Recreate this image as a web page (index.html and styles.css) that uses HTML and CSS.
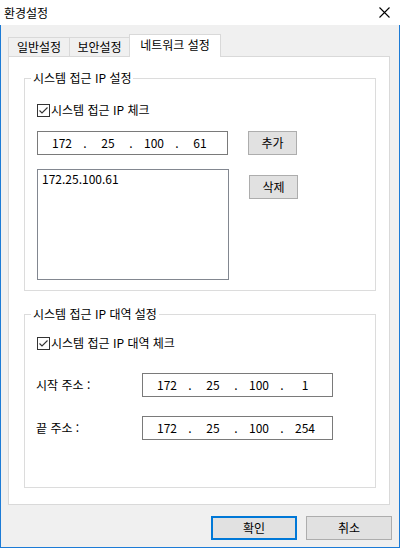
FILE: index.html
```html
<!DOCTYPE html>
<html lang="ko">
<head>
<meta charset="utf-8">
<title>환경설정</title>
<link rel="stylesheet" href="styles.css">
</head>
<body>
<div class="window">
  <div class="titlebar">
    <span class="title">환경설정</span>
    <svg class="close" width="11" height="11" viewBox="0 0 11 11"><path d="M0.5 0.5 L10.5 10.5 M10.5 0.5 L0.5 10.5" stroke="#000" stroke-width="1.1" fill="none"/></svg>
  </div>
  <div class="client">
    <div class="tabs">
      <div class="tab t1">일반설정</div>
      <div class="tab t2">보안설정</div>
      <div class="tab t3 active">네트워크 설정</div>
    </div>
    <div class="panel">
      <fieldset class="group g1">
        <legend>시스템 접근 IP 설정</legend>
        <div class="check">
          <svg class="cbox" width="13" height="13" viewBox="0 0 13 13"><rect x="0.5" y="0.5" width="12" height="12" fill="#fff" stroke="#333"/><path d="M2.5 6.5 L5 9 L10.5 3.5" stroke="#333" stroke-width="1.1" fill="none"/></svg>
          <span>시스템 접근 IP 체크</span>
        </div>
        <div class="iprow">
          <div class="ipfield">
            <span class="oct">172</span><span class="dot">.</span><span class="oct">25</span><span class="dot">.</span><span class="oct">100</span><span class="dot">.</span><span class="oct">61</span>
          </div>
          <div class="btn small">추가</div>
        </div>
        <div class="listrow">
          <div class="listbox">172.25.100.61</div>
          <div class="btn small del">삭제</div>
        </div>
      </fieldset>
      <fieldset class="group g2">
        <legend>시스템 접근 IP 대역 설정</legend>
        <div class="check">
          <svg class="cbox" width="13" height="13" viewBox="0 0 13 13"><rect x="0.5" y="0.5" width="12" height="12" fill="#fff" stroke="#333"/><path d="M2.5 6.5 L5 9 L10.5 3.5" stroke="#333" stroke-width="1.1" fill="none"/></svg>
          <span>시스템 접근 IP 대역 체크</span>
        </div>
        <div class="addr first">
          <span class="alabel">시작 주소 :</span>
          <div class="ipfield">
            <span class="oct">172</span><span class="dot">.</span><span class="oct">25</span><span class="dot">.</span><span class="oct">100</span><span class="dot">.</span><span class="oct">1</span>
          </div>
        </div>
        <div class="addr second">
          <span class="alabel">끝 주소 :</span>
          <div class="ipfield">
            <span class="oct">172</span><span class="dot">.</span><span class="oct">25</span><span class="dot">.</span><span class="oct">100</span><span class="dot">.</span><span class="oct">254</span>
          </div>
        </div>
      </fieldset>
    </div>
    <div class="footer">
      <div class="btn big default">확인</div>
      <div class="btn big">취소</div>
    </div>
  </div>
</div>
</body>
</html>
```
FILE: styles.css
```css
* { box-sizing: border-box; }
html, body { margin: 0; padding: 0; }
body {
  width: 400px;
  height: 548px;
  overflow: hidden;
  background: #fff;
  color: #000;
  font-family: "Noto Sans CJK KR", "Noto Sans", sans-serif;
  font-size: 12px;
  line-height: 16px;
}
.window {
  width: 400px;
  height: 548px;
  display: flex;
  flex-direction: column;
}
.titlebar {
  flex: none;
  height: 25px;
  background: #fff;
  display: flex;
  align-items: center;
  justify-content: space-between;
  padding: 0 10px 0 4px;
}
.close { display: block; }
.client {
  flex: 1;
  background: #f0f0f0;
  border: 1px solid #1c7bd6;
  border-top: none;
  padding: 9px 7px 0 7px;
  display: flex;
  flex-direction: column;
}
.tabs {
  display: flex;
  align-items: flex-end;
  height: 22px;
}
.tab {
  height: 19px;
  border: 1px solid #d9d9d9;
  border-bottom: none;
  background: #f0f0f0;
  text-align: center;
  line-height: 18px;
}
.tab + .tab { margin-left: -1px; }
.t1 { width: 62px; }
.t2 { width: 61px; }
.t3 { width: 92px; }
.tab.active {
  height: 23px;
  margin-bottom: -1px;
  background: #fff;
  position: relative;
  z-index: 1;
  line-height: 20px;
}
.panel {
  width: 382px;
  background: #fff;
  border: 1px solid #d9d9d9;
  padding: 0 13px 16px 15px;
}
.group {
  margin: 0;
  padding: 0 0 10px 12px;
  border: 1px solid #dcdcdc;
  min-width: 0;
}
.g1 { margin-top: 13px; }
.g2 { margin-top: 15px; padding-bottom: 47px; }
.group legend {
  padding: 0 2px;
  margin-left: -6px;
  line-height: 16px;
}
.check {
  display: flex;
  align-items: center;
  height: 16px;
  margin-top: 16px;
}
.g2 .check { margin-top: 13px; }
.cbox { display: block; margin-right: 1px; flex: none; }
.iprow {
  display: flex;
  margin-top: 13px;
}
.ipfield {
  width: 191px;
  height: 24px;
  background: #fff;
  border: 1px solid #7a7a7a;
  display: flex;
  padding-left: 9px;
  line-height: 22px;
}
.oct { width: 30px; text-align: center; }
.dot { width: 16px; text-align: center; }
.btn {
  height: 24px;
  background: #e1e1e1;
  border: 1px solid #adadad;
  text-align: center;
  line-height: 22px;
}
.small { width: 49px; margin-left: 20px; }
.listrow {
  display: flex;
  margin-top: 14px;
}
.listbox {
  width: 192px;
  height: 111px;
  background: #fff;
  border: 1px solid #828790;
  padding: 1px 4px;
}
.del { margin-top: 6px; }
.addr {
  display: flex;
  align-items: center;
}
.addr.first { margin-top: 22px; }
.addr.second { margin-top: 19px; }
.alabel { width: 106px; margin-left: -1px; }
.footer {
  display: flex;
  justify-content: flex-end;
  gap: 9px;
  margin-top: 11px;
}
.big { width: 86px; }
.default { border: 2px solid #0078d7; line-height: 20px; }
```
